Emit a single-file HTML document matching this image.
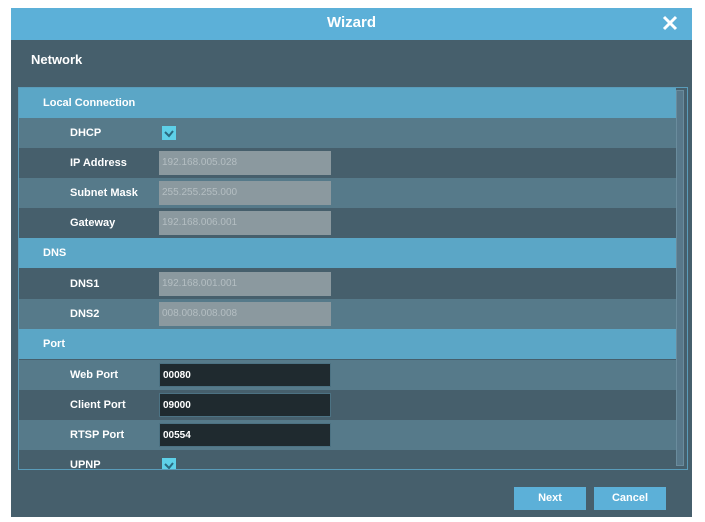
<!DOCTYPE html>
<html><head><style>
body{margin:0;width:705px;height:522px;background:#fff;position:relative;overflow:hidden;font-family:"Liberation Sans",Arial,sans-serif;font-weight:bold;}
.d{position:absolute;left:11px;top:8px;width:681px;height:509px;background:#465f6c;}
.t{position:absolute;left:0;top:0;width:681px;height:32px;background:#5cb0d8;color:#fff;font-size:15px;text-align:center;line-height:30px;}
.x{position:absolute;right:14px;top:7px;}
.net{position:absolute;left:20px;top:44px;color:#fff;font-size:13px;}
.p{position:absolute;left:7px;top:79px;width:668px;height:381px;border:1px solid #5a9cba;overflow:hidden;background:#465f6c;}
.r{position:absolute;left:0;width:657px;height:30px;color:#fff;font-size:11px;line-height:30px;}
.h{background:#5ba6c6;padding-left:24px;width:633px;}
.l{background:#567a8a;}
.k{background:#465f6c;}
.r .lb{position:absolute;left:51px;}
.in{position:absolute;left:140px;top:3px;width:172px;height:24px;line-height:24px;background:#8b999f;color:#b4bec2;font-weight:normal;font-size:10px;padding-left:3px;box-sizing:border-box;}
.dk{background:#1f2a2f;color:#fff;font-weight:bold;border:1px solid #4c7283;}
.cb{position:absolute;left:143px;top:8px;width:14px;height:14px;background:#5ed0e8;display:block;}
.cb svg{display:block;}
.sb{position:absolute;left:657px;top:2px;width:8px;height:376px;background:#58788a;border:1px solid #6a8c9d;box-sizing:border-box;}
.b{position:absolute;top:479px;width:72px;height:23px;background:#5cb0d8;color:#fff;font-size:11px;text-align:center;line-height:23px;}
</style></head><body>
<div class="d">
<div class="t">Wizard<svg class="x" width="16" height="16" viewBox="0 0 16 16"><path d="M2 2L14 14M14 2L2 14" stroke="#fff" stroke-width="3"/></svg></div>
<div class="net">Network</div>
<div class="p">
<div class="r h" style="top:0">Local Connection</div>
<div class="r l" style="top:30px"><span class="lb">DHCP</span><span class="cb"><svg width="14" height="14"><path d="M3 6L7 10L11 5" stroke="#2a6a80" stroke-width="2" fill="none"/></svg></span></div>
<div class="r k" style="top:60px"><span class="lb">IP Address</span><span class="in">192.168.005.028</span></div>
<div class="r l" style="top:90px"><span class="lb">Subnet Mask</span><span class="in">255.255.255.000</span></div>
<div class="r k" style="top:120px"><span class="lb">Gateway</span><span class="in">192.168.006.001</span></div>
<div class="r h" style="top:150px">DNS</div>
<div class="r k" style="top:181px"><span class="lb">DNS1</span><span class="in">192.168.001.001</span></div>
<div class="r l" style="top:211px"><span class="lb">DNS2</span><span class="in">008.008.008.008</span></div>
<div class="r h" style="top:241px">Port</div>
<div class="r l" style="top:272px"><span class="lb">Web Port</span><span class="in dk">00080</span></div>
<div class="r k" style="top:302px"><span class="lb">Client Port</span><span class="in dk">09000</span></div>
<div class="r l" style="top:332px"><span class="lb">RTSP Port</span><span class="in dk">00554</span></div>
<div class="r k" style="top:362px"><span class="lb">UPNP</span><span class="cb"><svg width="14" height="14"><path d="M3 6L7 10L11 5" stroke="#2a6a80" stroke-width="2" fill="none"/></svg></span></div>
<div class="sb"></div>
</div>
<div class="b" style="left:503px">Next</div>
<div class="b" style="left:583px">Cancel</div>
</div>
</body></html>
